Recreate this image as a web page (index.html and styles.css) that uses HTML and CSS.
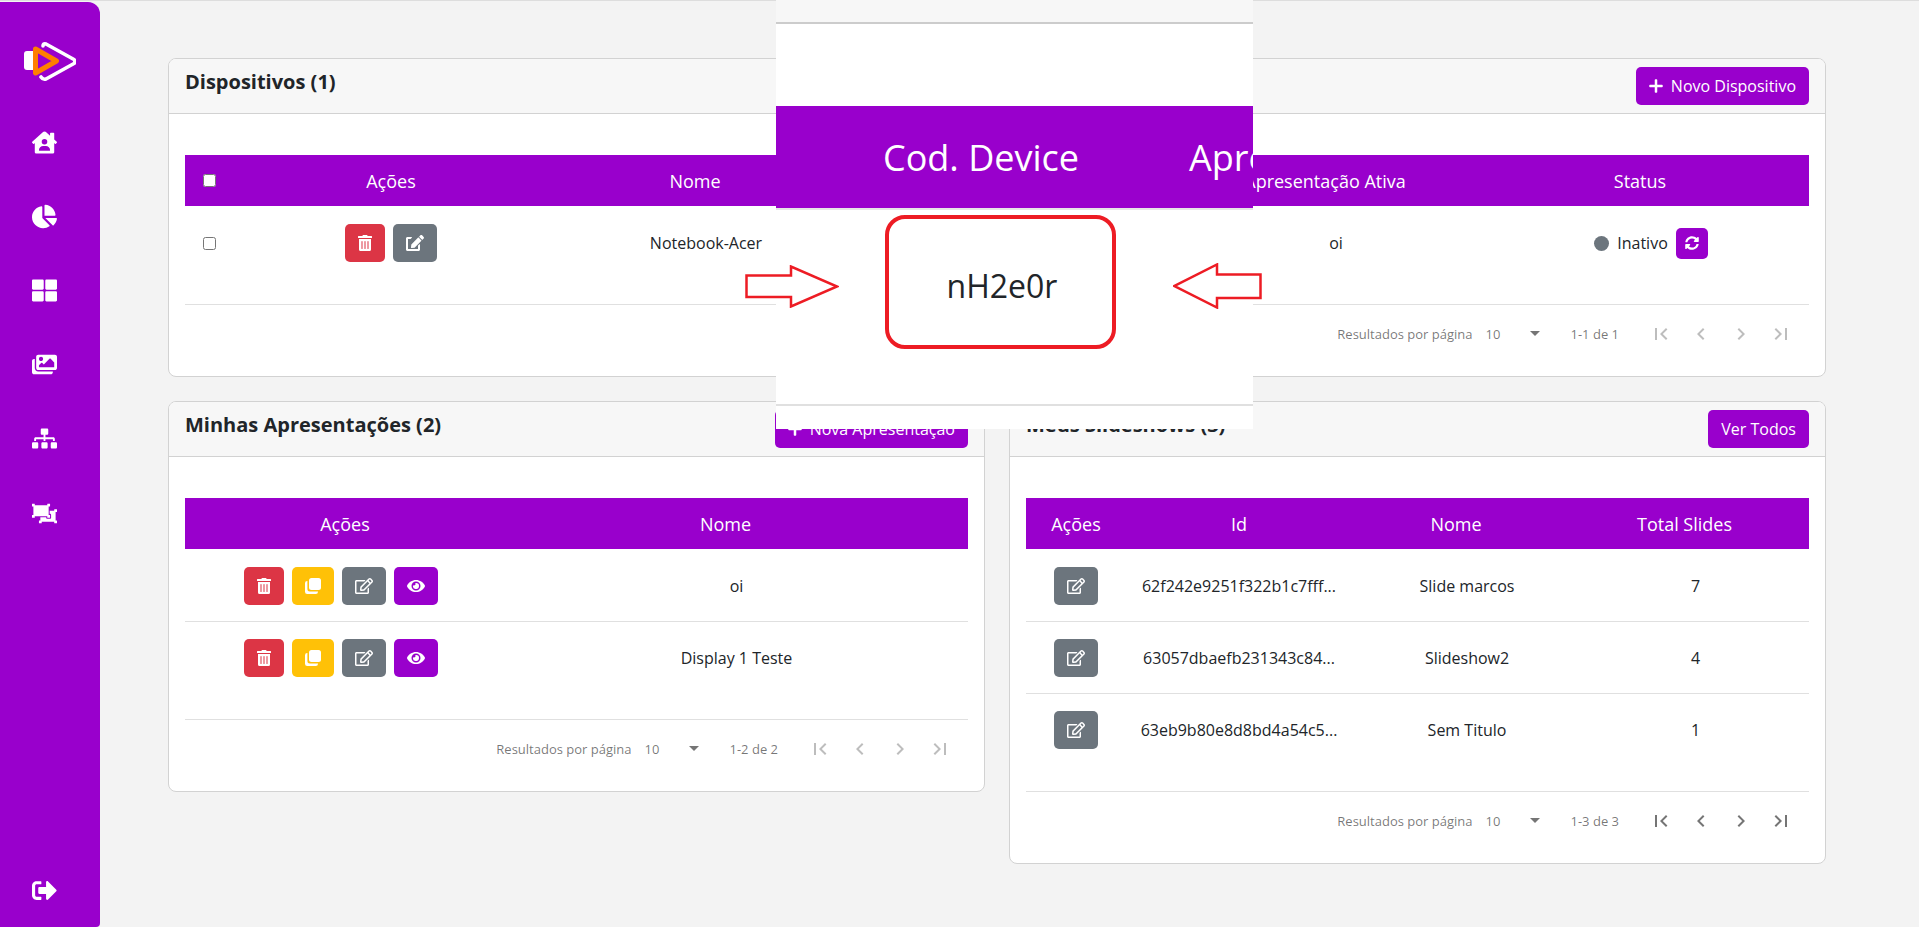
FILE: index.html
```html
<!DOCTYPE html>
<html lang="pt-BR">
<head>
  <meta charset="UTF-8">
  <meta name="viewport" content="width=device-width, initial-scale=1.0">
  <title>Dispositivos</title>
  <link rel="stylesheet" href="styles.css">
</head>
<body>

  <!-- icones -->
  <svg class="sprite" xmlns="http://www.w3.org/2000/svg">
    <symbol id="i-trash" viewBox="0 0 448 512"><path d="M32 464a48 48 0 0 0 48 48h288a48 48 0 0 0 48-48V128H32zm272-256a16 16 0 0 1 32 0v224a16 16 0 0 1-32 0zm-96 0a16 16 0 0 1 32 0v224a16 16 0 0 1-32 0zm-96 0a16 16 0 0 1 32 0v224a16 16 0 0 1-32 0zM432 32H312l-9.4-18.7A24 24 0 0 0 281.1 0H166.8a23.72 23.72 0 0 0-21.4 13.3L136 32H16A16 16 0 0 0 0 48v32a16 16 0 0 0 16 16h416a16 16 0 0 0 16-16V48a16 16 0 0 0-16-16z"/></symbol>
    <symbol id="i-edit" viewBox="0 0 576 512"><path d="M402.6 83.2l90.2 90.2c3.8 3.8 3.8 10 0 13.8L274.4 405.6l-92.8 10.3c-12.4 1.4-22.9-9.1-21.5-21.5l10.3-92.8L388.8 83.2c3.8-3.8 10-3.8 13.8 0zm162-22.9l-48.8-48.8c-15.2-15.2-39.9-15.2-55.2 0l-35.4 35.4c-3.8 3.8-3.8 10 0 13.8l90.2 90.2c3.8 3.8 10 3.8 13.8 0l35.4-35.4c15.2-15.3 15.2-40 0-55.2zM384 346.2V448H64V128h73.1c3.2 0 6.2-1.3 8.5-3.5l40-40c7.6-7.6 2.2-20.5-8.5-20.5H48C21.5 64 0 85.5 0 112v352c0 26.5 21.5 48 48 48h352c26.5 0 48-21.5 48-48V306.2c0-10.7-12.9-16-20.5-8.5l-40 40c-2.2 2.3-3.5 5.3-3.5 8.5z"/></symbol>
    <symbol id="i-edit-o" viewBox="0 0 576 512"><path d="M402.3 344.9l32-32c5-5 13.7-1.5 13.7 5.7V464c0 26.5-21.5 48-48 48H48c-26.5 0-48-21.5-48-48V112c0-26.5 21.5-48 48-48h273.5c7.1 0 10.7 8.6 5.7 13.7l-32 32c-1.5 1.5-3.5 2.3-5.7 2.3H48v352h352V350.5c0-2.1.8-4.1 2.3-5.6zm156.6-201.8L296.3 405.7l-90.4 10c-26.2 2.9-48.5-19.2-45.6-45.6l10-90.4L432.9 17.1c22.9-22.9 59.9-22.9 82.7 0l43.2 43.2c22.9 22.9 22.9 60 .1 82.8zM460.1 174L402 115.9 216.2 301.8l-7.3 65.3 65.3-7.3L460.1 174zm64.8-79.7l-43.2-43.2c-4.1-4.1-10.8-4.1-14.8 0L436 82l58.1 58.1 30.9-30.9c4-4.2 4-10.8-.1-14.9z"/></symbol>
    <symbol id="i-copy" viewBox="0 0 16 16"><rect x="4" y="0" width="12" height="12" rx="2.5"/><path d="M2.4 3H2.2A2.2 2.2 0 0 0 0 5.2v8.6A2.2 2.2 0 0 0 2.2 16h8.6a2.2 2.2 0 0 0 2.2-2.2v-.3H4.9a2.5 2.5 0 0 1-2.5-2.5z"/></symbol>
    <symbol id="i-eye" viewBox="0 0 576 512"><path d="M572.52 241.4C518.29 135.59 410.93 64 288 64S57.68 135.64 3.48 241.41a32.35 32.35 0 0 0 0 29.19C57.71 376.41 165.07 448 288 448s230.32-71.64 284.52-177.41a32.35 32.35 0 0 0 0-29.19zM288 400a144 144 0 1 1 144-144 143.93 143.93 0 0 1-144 144zm0-240a95.31 95.31 0 0 0-25.31 3.79 47.85 47.85 0 0 1-66.9 66.9A95.78 95.78 0 1 0 288 160z"/></symbol>
    <symbol id="i-sync" viewBox="0 0 512 512"><path d="M370.72 133.28C339.458 104.008 298.888 87.962 255.848 88c-77.458.068-144.328 53.178-162.791 126.85-1.344 5.363-6.122 9.15-11.651 9.15H24.103c-7.498 0-13.194-6.807-11.807-14.176C33.933 94.924 134.813 8 256 8c66.448 0 126.791 26.136 171.315 68.685L463.03 40.97C478.149 25.851 504 36.559 504 57.941V192c0 13.255-10.745 24-24 24H345.941c-21.382 0-32.09-25.851-16.971-40.971l41.75-41.749zM32 296h134.059c21.382 0 32.09 25.851 16.971 40.971l-41.75 41.75c31.262 29.273 71.835 45.319 114.876 45.28 77.418-.07 144.315-53.144 162.787-126.849 1.344-5.363 6.122-9.15 11.651-9.15h57.304c7.498 0 13.194 6.807 11.807 14.176C478.067 417.076 377.187 504 256 504c-66.448 0-126.791-26.136-171.315-68.685L48.97 471.03C33.851 486.149 8 475.441 8 454.059V320c0-13.255 10.745-24 24-24z"/></symbol>
    <symbol id="i-plus" viewBox="0 0 448 512"><path d="M416 216H264V64c0-13-11-24-24-24h-32c-13 0-24 11-24 24v152H32c-13 0-24 11-24 24v32c0 13 11 24 24 24h152v152c0 13 11 24 24 24h32c13 0 24-11 24-24V296h152c13 0 24-11 24-24v-32c0-13-11-24-24-24z"/></symbol>
    <symbol id="i-home" viewBox="0 0 576 512"><path d="M570.69,236.27,512,184.44V48a16,16,0,0,0-16-16H432a16,16,0,0,0-16,16V99.67L314.78,10.3C308.5,4.61,296.53,0,288,0s-20.46,4.61-26.74,10.3l-256,226A18.27,18.27,0,0,0,0,248.2a18.64,18.64,0,0,0,4.09,10.71L25.5,282.7a21.14,21.14,0,0,0,12,5.3,21.67,21.67,0,0,0,10.69-4.11l15.9-14V480a32,32,0,0,0,32,32H480a32,32,0,0,0,32-32V269.88l15.91,14A21.94,21.94,0,0,0,538.63,288a20.89,20.89,0,0,0,11.87-5.31l21.41-23.81A21.64,21.64,0,0,0,576,248.19,21,21,0,0,0,570.69,236.27ZM288,176a64,64,0,1,1-64,64A64,64,0,0,1,288,176ZM400,448H176a16,16,0,0,1-16-16,96,96,0,0,1,96-96h64a96,96,0,0,1,96,96A16,16,0,0,1,400,448Z"/></symbol>
    <symbol id="i-pie" viewBox="0 0 544 512"><path d="M527.79 288H290.5l158.03 158.03c6.04 6.04 15.98 6.53 22.19.68 38.7-36.46 65.32-85.61 73.13-140.86 1.34-9.46-6.51-17.85-16.06-17.85zm-15.83-64.8C503.72 103.74 408.26 8.28 288.8.04 279.68-.59 272 7.1 272 16.24V240h223.77c9.14 0 16.82-7.68 16.19-16.8zM224 288V50.71c0-9.55-8.39-17.4-17.84-16.06C86.99 51.49-4.1 155.6.14 280.37 4.5 408.51 114.83 513.59 243.03 511.98c50.4-.63 96.97-16.87 135.26-44.03 7.9-5.6 8.42-17.23 1.57-24.08L224 288z"/></symbol>
    <symbol id="i-grid" viewBox="0 0 512 512"><path d="M296 32h192c13.255 0 24 10.745 24 24v160c0 13.255-10.745 24-24 24H296c-13.255 0-24-10.745-24-24V56c0-13.255 10.745-24 24-24zm-80 0H24C10.745 32 0 42.745 0 56v160c0 13.255 10.745 24 24 24h192c13.255 0 24-10.745 24-24V56c0-13.255-10.745-24-24-24zM0 296v160c0 13.255 10.745 24 24 24h192c13.255 0 24-10.745 24-24V296c0-13.255-10.745-24-24-24H24c-13.255 0-24 10.745-24 24zm296 184h192c13.255 0 24-10.745 24-24V296c0-13.255-10.745-24-24-24H296c-13.255 0-24 10.745-24 24v160c0 13.255 10.745 24 24 24z"/></symbol>
    <symbol id="i-images" viewBox="0 0 576 512"><path d="M480 416v16c0 26.51-21.49 48-48 48H48c-26.51 0-48-21.49-48-48V176c0-26.51 21.49-48 48-48h16v208c0 44.112 35.888 80 80 80h336zm96-80V80c0-26.51-21.49-48-48-48H144c-26.51 0-48 21.49-48 48v256c0 26.51 21.49 48 48 48h384c26.51 0 48-21.49 48-48zM256 128c0 26.51-21.49 48-48 48s-48-21.49-48-48 21.49-48 48-48 48 21.49 48 48zm-96 144l55.515-55.515c4.686-4.686 12.284-4.686 16.971 0L272 256l135.515-135.515c4.686-4.686 12.284-4.686 16.971 0L512 208v112H160v-48z"/></symbol>
    <symbol id="i-sitemap" viewBox="0 0 640 512"><path d="M128 352H32c-17.67 0-32 14.33-32 32v96c0 17.67 14.33 32 32 32h96c17.67 0 32-14.33 32-32v-96c0-17.67-14.33-32-32-32zm-24-80h192v48h48v-48h192v48h48v-57.59c0-21.17-17.23-38.41-38.41-38.41H344v-64h40c17.67 0 32-14.33 32-32V32c0-17.67-14.33-32-32-32H256c-17.67 0-32 14.33-32 32v96c0 17.67 14.33 32 32 32h40v64H94.41C73.23 224 56 241.23 56 262.41V320h48v-48zm264 80h-96c-17.67 0-32 14.33-32 32v96c0 17.67 14.33 32 32 32h96c17.67 0 32-14.33 32-32v-96c0-17.67-14.33-32-32-32zm240 0h-96c-17.67 0-32 14.33-32 32v96c0 17.67 14.33 32 32 32h96c17.67 0 32-14.33 32-32v-96c0-17.67-14.33-32-32-32z"/></symbol>
    <symbol id="i-ungroup" viewBox="0 0 576 512"><path d="M64 320v26a6 6 0 0 1-6 6H6a6 6 0 0 1-6-6v-52a6 6 0 0 1 6-6h26V96H6a6 6 0 0 1-6-6V38a6 6 0 0 1 6-6h52a6 6 0 0 1 6 6v26h288V38a6 6 0 0 1 6-6h52a6 6 0 0 1 6 6v52a6 6 0 0 1-6 6h-26v192h26a6 6 0 0 1 6 6v52a6 6 0 0 1-6 6h-52a6 6 0 0 1-6-6v-26H64zm480-64v-32h26a6 6 0 0 0 6-6v-52a6 6 0 0 0-6-6h-52a6 6 0 0 0-6 6v26H408v72h8c13.255 0 24 10.745 24 24v64c0 13.255-10.745 24-24 24h-64c-13.255 0-24-10.745-24-24v-8H192v72h-26a6 6 0 0 0-6 6v52a6 6 0 0 0 6 6h52a6 6 0 0 0 6-6v-26h288v26a6 6 0 0 0 6 6h52a6 6 0 0 0 6-6v-52a6 6 0 0 0-6-6h-26V256z"/></symbol>
    <symbol id="i-logout" viewBox="0 0 512 512"><path d="M497 273L329 441c-15 15-41 4.5-41-17v-96H152c-13.3 0-24-10.7-24-24v-96c0-13.3 10.7-24 24-24h136V88c0-21.4 25.9-32 41-17l168 168c9.3 9.4 9.3 24.6 0 34zM192 436v-40c0-6.6-5.4-12-12-12H96c-17.7 0-32-14.3-32-32V160c0-17.7 14.3-32 32-32h84c6.6 0 12-5.4 12-12V76c0-6.6-5.4-12-12-12H96c-53 0-96 43-96 96v192c0 53 43 96 96 96h84c6.6 0 12-5.4 12-12z"/></symbol>
    <symbol id="i-first" viewBox="0 0 24 24"><path d="M18.41 16.59L13.82 12l4.59-4.59L17 6l-6 6 6 6zM6 6h2v12H6z"/></symbol>
    <symbol id="i-prev" viewBox="0 0 24 24"><path d="M15.41 7.41L14 6l-6 6 6 6 1.41-1.41L10.83 12z"/></symbol>
    <symbol id="i-next" viewBox="0 0 24 24"><path d="M10 6L8.59 7.41 13.17 12l-4.58 4.59L10 18l6-6z"/></symbol>
    <symbol id="i-last" viewBox="0 0 24 24"><path d="M5.59 7.41L10.18 12l-4.59 4.59L7 18l6-6-6-6zM16 6h2v12h-2z"/></symbol>
  </svg>

  <div class="app">

    <!-- Menu lateral -->
    <nav class="sidebar">
      <svg class="logo" viewBox="0 0 52 41">
        <rect x="0" y="10" width="12" height="19" rx="3" fill="#fff"/>
        <path d="M19 5 Q19 2 22 3 L50 18.5 Q52 20.5 50 22.5 L22 38 Q19 39 17 36" fill="none" stroke="#fff" stroke-width="3.6" stroke-linejoin="round" stroke-linecap="round"/>
        <path d="M11.5 8 L32.5 20 L11.5 32 Z" fill="#9900cc" stroke="#ff7f00" stroke-width="5" stroke-linejoin="round"/>
      </svg>
      <a class="nav-item"><svg class="nav-icon"><use href="#i-home"/></svg></a>
      <a class="nav-item"><svg class="nav-icon"><use href="#i-pie"/></svg></a>
      <a class="nav-item"><svg class="nav-icon"><use href="#i-grid"/></svg></a>
      <a class="nav-item"><svg class="nav-icon"><use href="#i-images"/></svg></a>
      <a class="nav-item"><svg class="nav-icon"><use href="#i-sitemap"/></svg></a>
      <a class="nav-item"><svg class="nav-icon"><use href="#i-ungroup"/></svg></a>
      <a class="nav-item nav-logout"><svg class="nav-icon"><use href="#i-logout"/></svg></a>
    </nav>

    <main class="content">

      <!-- Dispositivos -->
      <section class="card card-wide">
        <header class="card-header">
          <h2>Dispositivos (1)</h2>
          <button class="btn btn-purple btn-text"><svg class="icon-plus"><use href="#i-plus"/></svg>Novo Dispositivo</button>
        </header>
        <div class="card-body">
          <table class="grid">
            <colgroup>
              <col class="c48"><col class="c316"><col class="c314"><col class="c312"><col class="c322"><col>
            </colgroup>
            <thead>
              <tr>
                <th><input type="checkbox"></th>
                <th>Ações</th>
                <th><span class="sort">Nome</span></th>
                <th></th>
                <th><span class="sort">Apresentação Ativa</span></th>
                <th class="col-status"><span class="sort">Status</span></th>
              </tr>
            </thead>
            <tbody>
              <tr>
                <td><input type="checkbox"></td>
                <td>
                  <div class="actions">
                    <button class="btn btn-red"><svg class="ic"><use href="#i-trash"/></svg></button>
                    <button class="btn btn-gray w44"><svg class="ic"><use href="#i-edit"/></svg></button>
                  </div>
                </td>
                <td>Notebook-Acer</td>
                <td></td>
                <td>oi</td>
                <td class="col-status">
                  <div class="status">
                    <span class="dot"></span>
                    <span>Inativo</span>
                    <button class="btn btn-purple btn-sync"><svg class="ic ic-sm"><use href="#i-sync"/></svg></button>
                  </div>
                </td>
              </tr>
            </tbody>
          </table>
          <div class="paginator">
            <span>Resultados por página</span>
            <span class="page-size">10<i class="caret"></i></span>
            <span class="range">1-1 de 1</span>
            <span class="page-btn off"><svg><use href="#i-first"/></svg></span>
            <span class="page-btn off"><svg><use href="#i-prev"/></svg></span>
            <span class="page-btn off"><svg><use href="#i-next"/></svg></span>
            <span class="page-btn off"><svg><use href="#i-last"/></svg></span>
          </div>
        </div>
      </section>

      <!-- Minhas Apresentações -->
      <section class="card">
        <header class="card-header">
          <h2>Minhas Apresentações (2)</h2>
          <button class="btn btn-purple btn-text"><svg class="icon-plus"><use href="#i-plus"/></svg>Nova Apresentação</button>
        </header>
        <div class="card-body">
          <table class="grid">
            <colgroup><col class="c320"><col></colgroup>
            <thead>
              <tr><th>Ações</th><th><span class="sort">Nome</span></th></tr>
            </thead>
            <tbody>
              <tr>
                <td class="pad-right">
                  <div class="actions">
                    <button class="btn btn-red"><svg class="ic"><use href="#i-trash"/></svg></button>
                    <button class="btn btn-yellow w42"><svg class="ic"><use href="#i-copy"/></svg></button>
                    <button class="btn btn-gray w44"><svg class="ic"><use href="#i-edit-o"/></svg></button>
                    <button class="btn btn-purple w44"><svg class="ic"><use href="#i-eye"/></svg></button>
                  </div>
                </td>
                <td>oi</td>
              </tr>
              <tr>
                <td class="pad-right">
                  <div class="actions">
                    <button class="btn btn-red"><svg class="ic"><use href="#i-trash"/></svg></button>
                    <button class="btn btn-yellow w42"><svg class="ic"><use href="#i-copy"/></svg></button>
                    <button class="btn btn-gray w44"><svg class="ic"><use href="#i-edit-o"/></svg></button>
                    <button class="btn btn-purple w44"><svg class="ic"><use href="#i-eye"/></svg></button>
                  </div>
                </td>
                <td>Display 1 Teste</td>
              </tr>
            </tbody>
          </table>
          <div class="paginator">
            <span>Resultados por página</span>
            <span class="page-size">10<i class="caret"></i></span>
            <span class="range">1-2 de 2</span>
            <span class="page-btn off"><svg><use href="#i-first"/></svg></span>
            <span class="page-btn off"><svg><use href="#i-prev"/></svg></span>
            <span class="page-btn off"><svg><use href="#i-next"/></svg></span>
            <span class="page-btn off"><svg><use href="#i-last"/></svg></span>
          </div>
        </div>
      </section>

      <!-- Meus Slideshows -->
      <section class="card">
        <header class="card-header">
          <h2>Meus Slideshows (3)</h2>
          <button class="btn btn-purple btn-text">Ver Todos</button>
        </header>
        <div class="card-body">
          <table class="grid">
            <colgroup><col class="c100"><col class="c226"><col class="c230"><col></colgroup>
            <thead>
              <tr>
                <th>Ações</th>
                <th>Id</th>
                <th><span class="sort">Nome</span></th>
                <th><span class="sort">Total Slides</span></th>
              </tr>
            </thead>
            <tbody>
              <tr>
                <td><div class="actions"><button class="btn btn-gray w44"><svg class="ic"><use href="#i-edit-o"/></svg></button></div></td>
                <td>62f242e9251f322b1c7fff...</td>
                <td>Slide marcos</td>
                <td>7</td>
              </tr>
              <tr>
                <td><div class="actions"><button class="btn btn-gray w44"><svg class="ic"><use href="#i-edit-o"/></svg></button></div></td>
                <td>63057dbaefb231343c84...</td>
                <td>Slideshow2</td>
                <td>4</td>
              </tr>
              <tr>
                <td><div class="actions"><button class="btn btn-gray w44"><svg class="ic"><use href="#i-edit-o"/></svg></button></div></td>
                <td>63eb9b80e8d8bd4a54c5...</td>
                <td>Sem Titulo</td>
                <td>1</td>
              </tr>
            </tbody>
          </table>
          <div class="paginator">
            <span>Resultados por página</span>
            <span class="page-size">10<i class="caret"></i></span>
            <span class="range">1-3 de 3</span>
            <span class="page-btn"><svg><use href="#i-first"/></svg></span>
            <span class="page-btn"><svg><use href="#i-prev"/></svg></span>
            <span class="page-btn"><svg><use href="#i-next"/></svg></span>
            <span class="page-btn"><svg><use href="#i-last"/></svg></span>
          </div>
        </div>
      </section>

    </main>
  </div>

  <!-- Recorte ampliado por cima da pagina -->
  <div class="callout">
    <div class="callout-top"></div>
    <div class="callout-head">
      <span>Cod. Device</span>
      <span>Apre</span>
    </div>
    <div class="callout-row">nH2e0r</div>
  </div>
  <div class="callout-box"></div>
  <svg class="arrow arrow-right" viewBox="0 0 94 43"><path d="M1.5 10.5 H46 V1.5 L92 21.5 L46 41.5 V32 H1.5 Z"/></svg>
  <svg class="arrow arrow-left" viewBox="0 0 89 46"><path d="M87.5 11.5 H44 V1.5 L1.5 23 L44 44.5 V35 H87.5 Z"/></svg>

</body>
</html>
```

FILE: styles.css
```css
* {
  box-sizing: border-box;
}
html, body {
  height: 100%;
}
body {
  margin: 0;
  overflow: hidden;
  font-family: "Open Sans", Arial, sans-serif;
  font-size: 16px;
  color: #212529;
  background-color: #f3f3f3;
}
.sprite {
  position: absolute;
  width: 0;
  height: 0;
}
.app {
  display: flex;
  height: 100%;
  padding-top: 2px;
  border-top: 1px solid #ddd;
}

/* menu lateral */
.sidebar {
  flex: 0 0 100px;
  display: flex;
  flex-direction: column;
  align-items: center;
  margin-top: -1px;
  padding: 103px 11px 0 0;
  background-color: #9900cc;
  border-radius: 0 12px 4px 0;
  position: relative;
}
.logo {
  position: absolute;
  top: 39px;
  left: 24px;
  width: 52px;
  height: 41px;
}
.nav-item {
  display: flex;
  align-items: center;
  justify-content: center;
  width: 100%;
  height: 74.2px;
}
.nav-icon {
  width: 25px;
  height: 25px;
  fill: #fff;
}
.nav-logout {
  margin-top: auto;
  margin-bottom: -1px;
}

/* conteudo */
.content {
  flex: 1;
  display: grid;
  grid-template-columns: 817px 817px;
  column-gap: 24px;
  row-gap: 24px;
  align-content: start;
  align-items: start;
  padding: 55px 0 0 68px;
}
.card {
  background-color: #fff;
  border: 1px solid #d2d2d2;
  border-radius: 8px;
  overflow: hidden;
}
.card-wide {
  grid-column: 1 / 3;
}
.card-header {
  display: flex;
  justify-content: space-between;
  align-items: flex-start;
  height: 55px;
  padding: 8px 16px 0;
  background-color: #f7f7f7;
  border-bottom: 1px solid #d2d2d2;
}
.card-header h2 {
  margin: 3px 0 0;
  font-size: 20px;
  line-height: 24px;
  font-weight: 700;
}
.card-body {
  padding: 41px 16px 0;
}

/* botoes */
.btn {
  display: inline-flex;
  align-items: center;
  justify-content: center;
  width: 40px;
  height: 38px;
  padding: 0;
  border: none;
  border-radius: 5px;
  color: #fff;
  font-family: inherit;
  font-size: 16px;
}
.btn-text {
  width: auto;
  padding: 0 13px;
}
.btn-red { background-color: #dc3545; }
.btn-gray { background-color: #6c757d; }
.btn-yellow { background-color: #ffc107; }
.btn-purple { background-color: #9900cc; }
.w42 { width: 42px; }
.w44 { width: 44px; }
.ic {
  width: 18px;
  height: 16px;
  fill: #fff;
}
.ic-sm {
  width: 14px;
  height: 14px;
}
.icon-plus {
  width: 14px;
  height: 16px;
  margin-right: 8px;
  fill: #fff;
}
.btn-sync {
  width: 32px;
  height: 31px;
}

/* tabelas */
.grid {
  width: 100%;
  table-layout: fixed;
  border-collapse: separate;
  border-spacing: 0;
  margin-bottom: 26px;
}
.c48 { width: 48px; }
.c100 { width: 100px; }
.c226 { width: 226px; }
.c230 { width: 230px; }
.c312 { width: 312px; }
.c314 { width: 314px; }
.c316 { width: 316px; }
.c320 { width: 320px; }
.c322 { width: 322px; }
.grid th {
  height: 51px;
  padding: 0;
  background-color: #9900cc;
  color: #fff;
  font-size: 18px;
  font-weight: 400;
  text-align: center;
}
.grid td {
  padding: 17px 0 16px;
  text-align: center;
  border-bottom: 1px solid #e0e0e0;
}
.grid tbody tr:first-child td {
  padding-top: 18px;
}
.grid tbody tr:last-child td {
  border-bottom: none;
}
.grid input {
  display: block;
  margin: 0 auto 0 18px;
}
.sort {
  margin-right: 22px;
}
.grid .col-status {
  padding-right: 4px;
}
.grid .pad-right {
  padding-right: 8px;
}
.actions {
  display: flex;
  justify-content: center;
  gap: 8px;
}
.status {
  display: flex;
  align-items: center;
  justify-content: center;
  gap: 8px;
}
.dot {
  width: 15px;
  height: 15px;
  border-radius: 50%;
  background-color: #6c757d;
}

/* paginacao */
.paginator {
  display: flex;
  justify-content: flex-end;
  align-items: center;
  height: 72px;
  padding: 0 8px 14px 0;
  border-top: 1px solid #e0e0e0;
  font-size: 13px;
  color: rgba(0, 0, 0, 0.54);
}
.page-size {
  display: flex;
  align-items: center;
  justify-content: space-between;
  width: 54px;
  margin-left: 13px;
}
.caret {
  width: 0;
  height: 0;
  border-left: 5px solid transparent;
  border-right: 5px solid transparent;
  border-top: 5px solid rgba(0, 0, 0, 0.54);
}
.range {
  margin: 0 22px 0 31px;
}
.page-btn {
  display: flex;
  justify-content: center;
  width: 40px;
}
.page-btn svg {
  width: 24px;
  height: 24px;
  fill: rgba(0, 0, 0, 0.54);
}
.page-btn.off svg {
  fill: rgba(0, 0, 0, 0.26);
}

/* recorte ampliado */
.callout {
  position: absolute;
  top: 0;
  left: 776px;
  width: 477px;
  height: 429px;
  overflow: hidden;
  background-color: #fff;
}
.callout-top {
  height: 24px;
  background-color: #f7f7f7;
  border-bottom: 2px solid #ccc;
}
.callout-head {
  display: flex;
  align-items: center;
  gap: 110px;
  height: 104px;
  margin-top: 82px;
  padding: 0 0 0 107px;
  background-color: #9900cc;
  border-bottom: 2px solid #e6e6e6;
  color: #fff;
  font-size: 36px;
  white-space: nowrap;
}
.callout-row {
  display: flex;
  align-items: center;
  justify-content: center;
  width: 338px;
  height: 150px;
  margin-left: 57px;
  font-size: 32px;
}
.callout::after {
  content: "";
  position: absolute;
  left: 0;
  right: 0;
  top: 404px;
  height: 2px;
  background-color: #e0e0e0;
}
.callout-box {
  position: absolute;
  top: 215px;
  left: 885px;
  width: 231px;
  height: 134px;
  border: 4px solid #ed1c24;
  border-radius: 20px;
}
.arrow {
  position: absolute;
  fill: #fff;
  stroke: #ed1c24;
  stroke-width: 2.5;
}
.arrow-right {
  top: 265px;
  left: 745px;
  width: 94px;
  height: 43px;
}
.arrow-left {
  top: 263px;
  left: 1173px;
  width: 89px;
  height: 46px;
}
```
